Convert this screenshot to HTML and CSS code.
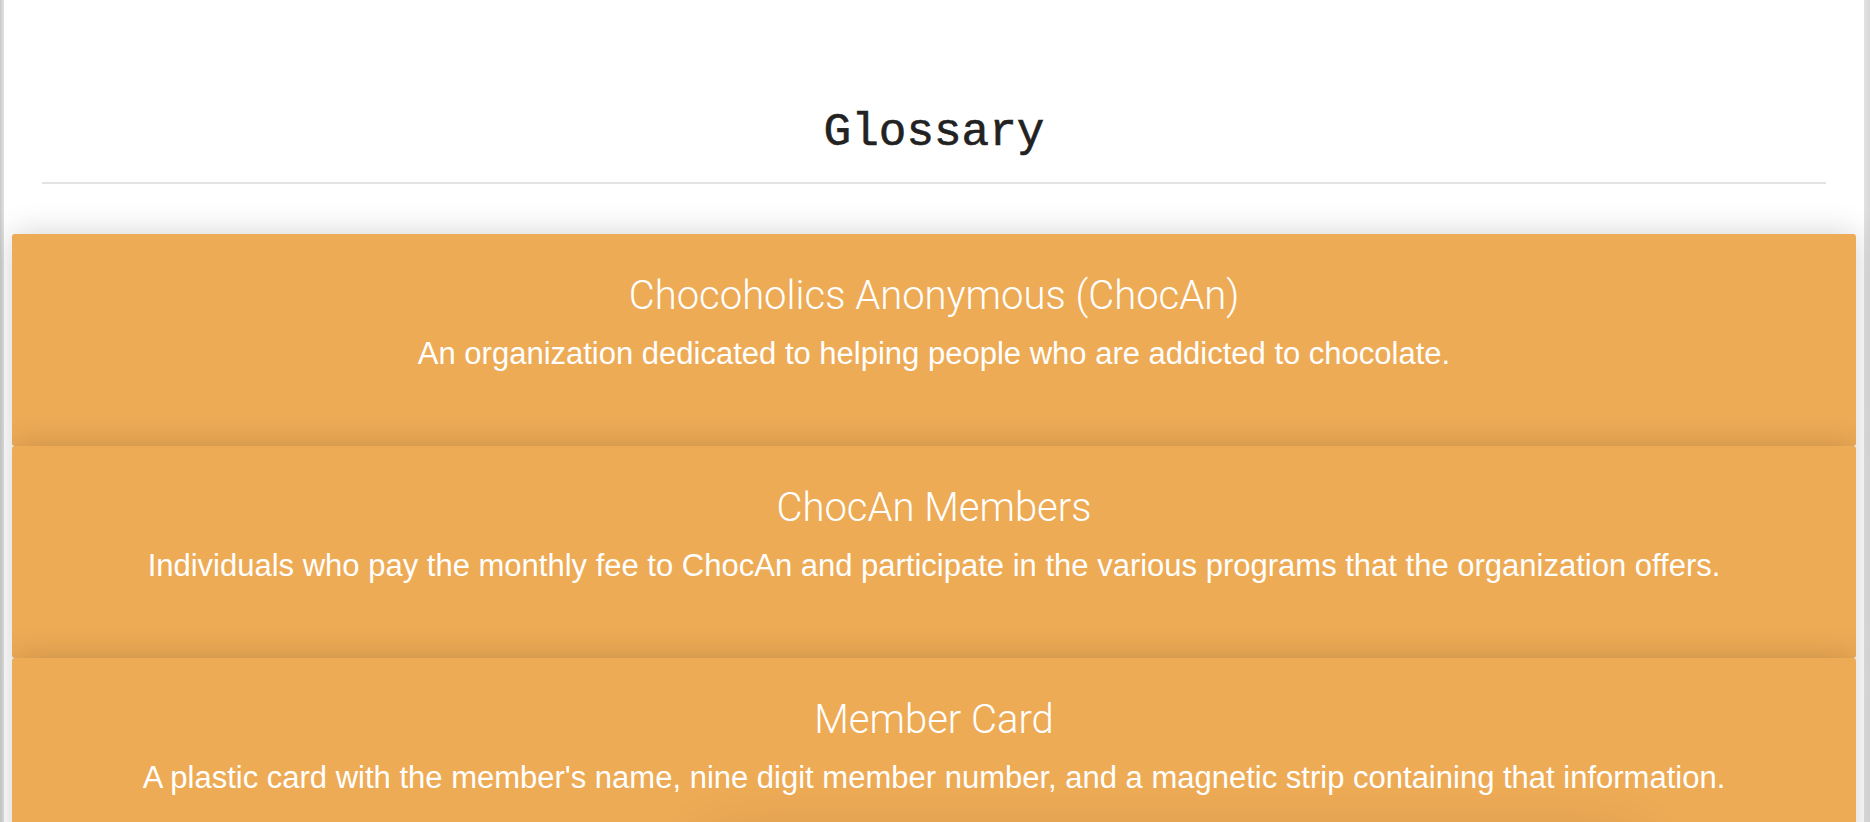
FILE: index.html
```html
<!DOCTYPE html>
<html lang="en">
<head>
<meta charset="utf-8">
<title>Glossary</title>
<link rel="stylesheet" href="styles.css">
</head>
<body>
  <main class="page">
    <header class="page-header">
      <h1 class="page-title">Glossary</h1>
      <hr class="divider">
    </header>
    <section class="terms">
      <article class="term">
        <h2 class="term-name">Chocoholics Anonymous (ChocAn)</h2>
        <p class="term-def">An organization dedicated to helping people who are addicted to chocolate.</p>
      </article>
      <article class="term">
        <h2 class="term-name">ChocAn Members</h2>
        <p class="term-def">Individuals who pay the monthly fee to ChocAn and participate in the various programs that the organization offers.</p>
      </article>
      <article class="term">
        <h2 class="term-name">Member Card</h2>
        <p class="term-def">A plastic card with the member's name, nine digit member number, and a magnetic strip containing that information.</p>
      </article>
      <div class="term-next"></div>
    </section>
  </main>
</body>
</html>
```

FILE: styles.css
```css
html, body {
  margin: 0;
  height: 100%;
  overflow: hidden;
}

body {
  background: linear-gradient(to right, #c9c9c9 0, #e2e2e2 4px, #e2e2e2 calc(100% - 6px), #d8d8d8 100%);
  padding: 0 6px 0 4px;
  box-sizing: border-box;
  font-family: "Liberation Sans", Arial, Helvetica, sans-serif;
}

.page {
  background: #ffffff;
  min-height: 100%;
  padding: 0 8px;
  box-sizing: border-box;
}

.page-header {
  padding: 0 30px;
}

.page-title {
  margin: 0;
  padding-top: 105px;
  text-align: center;
  font-family: "Liberation Mono", "Courier New", monospace;
  font-weight: normal;
  font-size: 46px;
  line-height: 56px;
  color: #222222;
  -webkit-text-stroke: 0.6px #222222;
}

.divider {
  margin: 21px 0 0;
  border: 0;
  height: 2px;
  background: #e3e3e3;
}

.terms {
  margin-top: 50px;
  display: flex;
  flex-direction: column;
}

.term {
  background: #eeab56;
  border-radius: 3px;
  box-shadow: 0 0 32px rgba(0, 0, 0, 0.18);
  padding: 40px 20px 0;
  height: 212px;
  box-sizing: border-box;
  text-align: center;
  color: #ffffff;
}

.term-name {
  margin: 0;
  font-family: Roboto, "Liberation Sans", sans-serif;
  font-weight: 300;
  font-size: 40px;
  line-height: 44px;
}

.term-def {
  margin: 14px 0 0;
  font-size: 31px;
  line-height: 44px;
}

.term-next {
  align-self: flex-start;
  margin-left: 700px;
  width: 920px;
  height: 120px;
  margin-top: -10px;
  background: #eeab56;
  box-shadow: 0 0 70px rgba(0, 0, 0, 0.3);
}
```
